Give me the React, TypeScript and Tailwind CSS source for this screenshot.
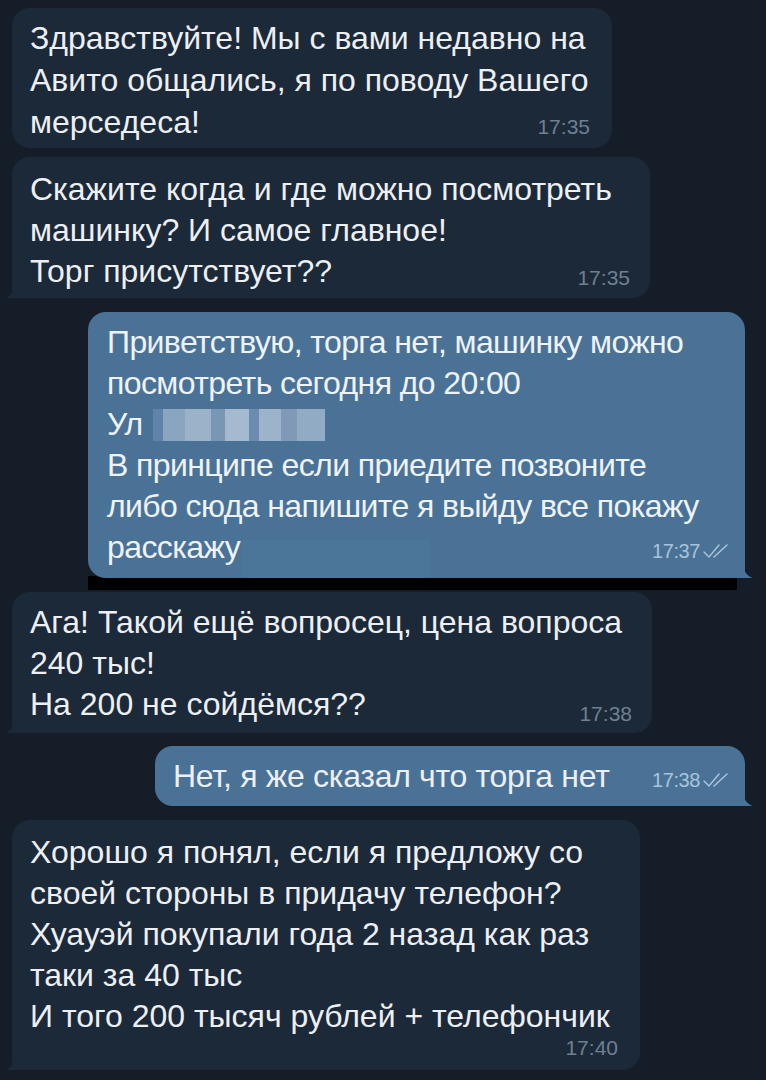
import React from 'react'

type Side = 'in' | 'out'

function Checks() {
  return (
    <svg width="28" height="16" viewBox="0 0 28 16" className="ml-[2px]">
      <path d="M2 9 L7 14 L17 2" fill="none" stroke="currentColor" strokeWidth="1.5" strokeLinecap="round" />
      <path d="M12 14 L25 2" fill="none" stroke="currentColor" strokeWidth="1.5" strokeLinecap="round" />
    </svg>
  )
}

function Tail({ side }: { side: Side }) {
  if (side === 'in') {
    return (
      <svg width="16" height="14" viewBox="0 0 16 14" className="absolute left-[-7px] bottom-0">
        <path d="M16 0 L16 14 L0 14 C6 12 9 8 10 0 Z" fill="#1c2938" />
      </svg>
    )
  }
  return (
    <svg width="16" height="14" viewBox="0 0 16 14" className="absolute right-[-8px] bottom-0">
      <path d="M0 0 L0 14 L16 14 C10 12 7 8 6 0 Z" fill="#4a7297" />
    </svg>
  )
}

function Time({ t, side, className = '' }: { t: string; side: Side; className?: string }) {
  return (
    <div
      className={`shrink-0 flex items-center leading-[22px] whitespace-nowrap ${
        side === 'in' ? 'text-[21px] text-[#6e8092]' : 'text-[20px] tracking-[-0.4px] text-[#a9c3db]'
      } ${className}`}
    >
      {t}
      {side === 'out' && <Checks />}
    </div>
  )
}

export default function App() {
  return (
    <div className="w-[766px] h-[1080px] bg-[#151e28] pt-[8px] overflow-hidden flex flex-col font-['Liberation_Sans',Arial,sans-serif] text-[#eceff3] whitespace-nowrap">
      {/* 1 */}
      <div className="relative ml-[12px] w-[600px] h-[140px] shrink-0 rounded-[18px] bg-[#1c2938] pl-[18px] pr-[22px] pt-[9px] flex flex-col">
        <div className="text-[32px] leading-[42px]">
          Здравствуйте! Мы с вами недавно на
          <br />
          Авито общались, я по поводу Вашего
          <br />
          мерседеса!
        </div>
        <Time t="17:35" side="in" className="self-end -mt-[27px]" />
      </div>

      {/* 2 */}
      <div className="relative mt-[9px] ml-[12px] w-[638px] h-[141px] shrink-0 rounded-[18px] rounded-bl-none bg-[#1c2938] pl-[18px] pr-[20px] pt-[12px] flex flex-col">
        <div className="text-[32px] leading-[41px]">
          Скажите когда и где можно посмотреть
          <br />
          машинку? И самое главное!
          <br />
          Торг присутствует??
        </div>
        <Time t="17:35" side="in" className="self-end -mt-[25px]" />
        <Tail side="in" />
      </div>

      {/* 3 */}
      <div className="relative mt-[14px] ml-[88px] w-[657px] h-[266px] shrink-0 rounded-[18px] rounded-br-none bg-[#4a7297] pl-[19px] pr-[15px] pt-[10px] flex flex-col">
        <div className="text-[32px] leading-[41px] tracking-[-0.6px] text-[#eef3f8]">
          Приветствую, торга нет, машинку можно
          <br />
          посмотреть сегодня до 20:00
          <br />
          <span className="inline-flex items-center">
            Ул
            <span className="ml-[10px] inline-flex h-[32px] w-[172px] bg-[#6d8fb1]">
              <span className="w-[10px] bg-[#5f84a8]" />
              <span className="w-[22px] bg-[#8aa5c0]" />
              <span className="w-[26px] bg-[#9bb2c9]" />
              <span className="w-[14px] bg-[#7897b5]" />
              <span className="w-[24px] bg-[#a5bacf]" />
              <span className="w-[10px] bg-[#6a8cae]" />
              <span className="w-[22px] bg-[#9cb3ca]" />
              <span className="w-[16px] bg-[#8099b6]" />
              <span className="w-[28px] bg-[#92abc4]" />
            </span>
          </span>
          <br />
          В принципе если приедите позвоните
          <br />
          либо сюда напишите я выйду все покажу
          <br />
          <span className="inline-flex items-end">
            расскажу
            <span className="ml-[2px] mb-[-10px] h-[38px] w-[188px] bg-[#4c759a]" />
          </span>
        </div>
        <Time t="17:37" side="out" className="self-end -mt-[28px]" />
        <Tail side="out" />
      </div>

      {/* black bar */}
      <div className="-mt-[2px] ml-[88px] w-[649px] h-[14px] shrink-0 bg-black" />

      {/* 4 */}
      <div className="relative mt-[2px] ml-[12px] w-[640px] h-[141px] shrink-0 rounded-[18px] rounded-bl-none bg-[#1c2938] pl-[18px] pr-[20px] pt-[10px] flex flex-col">
        <div className="text-[32px] leading-[41px]">
          Ага! Такой ещё вопросец, цена вопроса
          <br />
          240 тыс!
          <br />
          На 200 не сойдёмся??
        </div>
        <Time t="17:38" side="in" className="self-end -mt-[22px]" />
        <Tail side="in" />
      </div>

      {/* 5 */}
      <div className="relative mt-[13px] ml-[155px] w-[590px] h-[60px] shrink-0 rounded-[18px] rounded-br-none bg-[#4a7297] pl-[18px] pr-[15px] flex justify-between items-center">
        <div className="text-[32px] leading-[41px] tracking-[-0.3px]">Нет, я же сказал что торга нет</div>
        <Time t="17:38" side="out" className="mt-[8px]" />
        <Tail side="out" />
      </div>

      {/* 6 */}
      <div className="relative mt-[14px] ml-[12px] w-[628px] h-[250px] shrink-0 rounded-[18px] rounded-bl-none bg-[#1c2938] pl-[18px] pr-[22px] pt-[12px] flex flex-col">
        <div className="text-[32px] leading-[41px]">
          Хорошо я понял, если я предложу со
          <br />
          своей стороны в придачу телефон?
          <br />
          Хуауэй покупали года 2 назад как раз
          <br />
          таки за 40 тыс
          <br />
          И того 200 тысяч рублей + телефончик
        </div>
        <Time t="17:40" side="in" className="self-end" />
        <Tail side="in" />
      </div>
    </div>
  )
}
